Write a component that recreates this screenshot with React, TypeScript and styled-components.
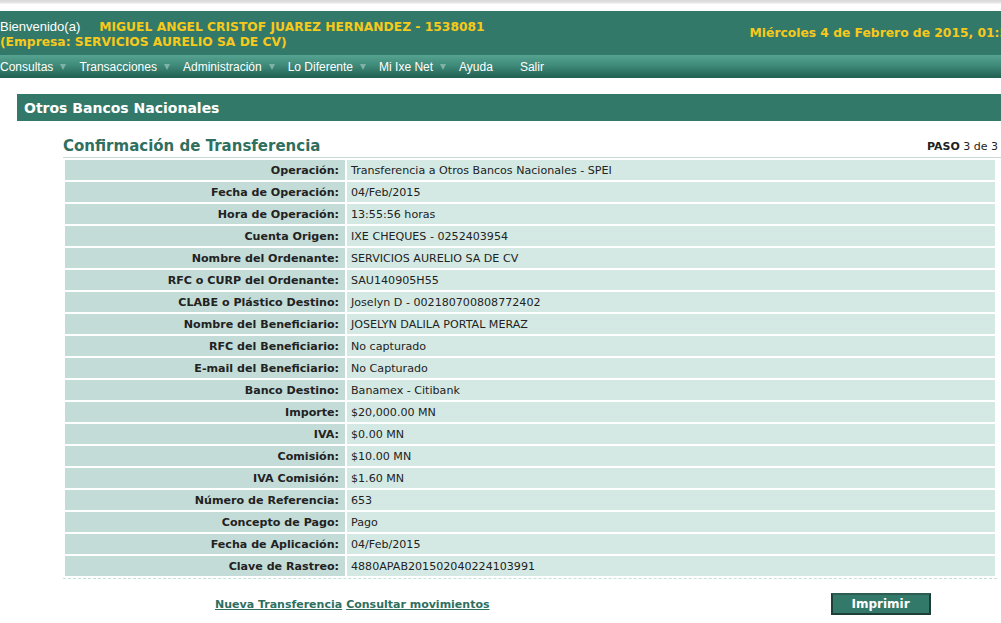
import styled, { createGlobalStyle } from "styled-components";

const GlobalStyle = createGlobalStyle`
  html, body {
    margin: 0;
    padding: 0;
    background: #ffffff;
  }
  body {
    font-family: "DejaVu Sans", Verdana, sans-serif;
    overflow: hidden;
  }
`;

const rows: [string, string][] = [
  ["Operación:", "Transferencia a Otros Bancos Nacionales - SPEI"],
  ["Fecha de Operación:", "04/Feb/2015"],
  ["Hora de Operación:", "13:55:56 horas"],
  ["Cuenta Origen:", "IXE CHEQUES - 0252403954"],
  ["Nombre del Ordenante:", "SERVICIOS AURELIO SA DE CV"],
  ["RFC o CURP del Ordenante:", "SAU140905H55"],
  ["CLABE o Plástico Destino:", "Joselyn D - 002180700808772402"],
  ["Nombre del Beneficiario:", "JOSELYN DALILA PORTAL MERAZ"],
  ["RFC del Beneficiario:", "No capturado"],
  ["E-mail del Beneficiario:", "No Capturado"],
  ["Banco Destino:", "Banamex - Citibank"],
  ["Importe:", "$20,000.00 MN"],
  ["IVA:", "$0.00 MN"],
  ["Comisión:", "$10.00 MN"],
  ["IVA Comisión:", "$1.60 MN"],
  ["Número de Referencia:", "653"],
  ["Concepto de Pago:", "Pago"],
  ["Fecha de Aplicación:", "04/Feb/2015"],
  ["Clave de Rastreo:", "4880APAB201502040224103991"],
];

const menu = [
  { label: "Consultas", arrow: true },
  { label: "Transacciones", arrow: true },
  { label: "Administración", arrow: true },
  { label: "Lo Diferente", arrow: true },
  { label: "Mi Ixe Net", arrow: true },
  { label: "Ayuda", arrow: false },
  { label: "Salir", arrow: false },
];

export default function App() {
  return (
    <>
      <GlobalStyle />
      <Page>
        <TopStrip />
        <Header>
          <Welcome>
            <WelcomeLine>
              <Hello>Bienvenido(a)</Hello>
              <UserName>MIGUEL ANGEL CRISTOF JUAREZ HERNANDEZ - 1538081</UserName>
            </WelcomeLine>
            <UserName>(Empresa: SERVICIOS AURELIO SA DE CV)</UserName>
          </Welcome>
          <DateText>Miércoles 4 de Febrero de 2015, 01:56 p.m.</DateText>
        </Header>
        <NavBar>
          {menu.map((m) => (
            <NavItem key={m.label} $gapAfter={m.label === "Ayuda"}>
              {m.label}
              {m.arrow && <Arrow />}
            </NavItem>
          ))}
        </NavBar>
        <SectionBar>Otros Bancos Nacionales</SectionBar>
        <Content>
          <TitleRow>
            <Title>Confirmación de Transferencia</Title>
            <Step>
              <b>PASO</b> 3 de 3
            </Step>
          </TitleRow>
          <DataTable>
            <tbody>
              {rows.map(([label, value]) => (
                <tr key={label}>
                  <LabelCell>{label}</LabelCell>
                  <ValueCell>{value}</ValueCell>
                </tr>
              ))}
            </tbody>
          </DataTable>
          <Footer>
            <Links>
              <Link href="#">Nueva Transferencia</Link>
              <Link href="#">Consultar movimientos</Link>
            </Links>
            <PrintButton type="button">Imprimir</PrintButton>
          </Footer>
        </Content>
      </Page>
    </>
  );
}

const Page = styled.div`
  width: 1001px;
  overflow: hidden;
`;

const TopStrip = styled.div`
  height: 11px;
  background: linear-gradient(#d8d8d8 0, #e6e6e6 3px, #ffffff 4px, #ffffff 100%);
`;

const Header = styled.div`
  height: 44px;
  background: #33796a;
  display: flex;
  align-items: center;
  white-space: nowrap;
  overflow: hidden;
`;

const Welcome = styled.div`
  display: flex;
  flex-direction: column;
  gap: 1px;
  padding-top: 1px;
`;

const WelcomeLine = styled.div`
  display: flex;
  align-items: baseline;
  gap: 19px;
`;

const Hello = styled.span`
  font-family: "Liberation Sans", Arial, sans-serif;
  font-size: 13px;
  color: #ffffff;
`;

const UserName = styled.span`
  font-family: "DejaVu Sans", Verdana, sans-serif;
  font-weight: bold;
  font-size: 12.3px;
  color: #f7c91a;
`;

const DateText = styled.span`
  font-family: "DejaVu Sans", Verdana, sans-serif;
  font-weight: bold;
  font-size: 12.3px;
  color: #f7c91a;
  margin-left: 265px;
  flex-shrink: 0;
`;

const NavBar = styled.div`
  height: 23px;
  background: linear-gradient(#56a392 0%, #3f8a79 45%, #215f51 100%);
  display: flex;
  align-items: center;
`;

const NavItem = styled.span<{ $gapAfter?: boolean }>`
  font-family: "Liberation Sans", Arial, sans-serif;
  font-size: 12px;
  color: #ffffff;
  display: flex;
  align-items: center;
  margin-right: ${(p) => (p.$gapAfter ? "27px" : "0")};
`;

const Arrow = styled.span`
  width: 0;
  height: 0;
  border-left: 3.5px solid transparent;
  border-right: 3.5px solid transparent;
  border-top: 6px solid #7fb3a6;
  margin: 1px 13px 0 7px;
`;

const SectionBar = styled.div`
  margin: 16px 0 0 17px;
  height: 27px;
  background: #33796a;
  color: #ffffff;
  font-family: "DejaVu Sans", Verdana, sans-serif;
  font-weight: bold;
  font-size: 14px;
  display: flex;
  align-items: center;
  padding-left: 7px;
`;

const Content = styled.div`
  margin: 16px 0 0 63px;
  width: 935px;
`;

const TitleRow = styled.div`
  display: flex;
  justify-content: space-between;
  align-items: flex-end;
  border-bottom: 1px solid #c9d9d5;
  padding-bottom: 2px;
  width: 938px;
`;

const Title = styled.h1`
  margin: 0;
  font-family: "DejaVu Sans", Verdana, sans-serif;
  font-weight: bold;
  font-size: 15px;
  color: #2f6f60;
`;

const Step = styled.span`
  font-family: "DejaVu Sans", Verdana, sans-serif;
  font-size: 11px;
  color: #222222;
  padding: 0 3px 2px 0;
  b {
    font-weight: bold;
  }
`;

const DataTable = styled.table`
  border-collapse: separate;
  border-spacing: 2px;
  width: 934px;
  font-family: "DejaVu Sans", Verdana, sans-serif;
  font-size: 11.1px;
  border-bottom: 1px dashed #c4e0da;
  td {
    height: 20px;
    padding: 0;
  }
`;

const LabelCell = styled.td`
  width: 274px;
  background: #c4dcd7;
  text-align: right;
  font-weight: bold;
  color: #222222;
  padding-right: 6px !important;
`;

const ValueCell = styled.td`
  background: #d4e9e4;
  color: #222222;
  padding-left: 4px !important;
`;

const Footer = styled.div`
  display: flex;
  align-items: center;
  margin-top: 14px;
`;

const Links = styled.div`
  display: flex;
  gap: 4px;
  margin-left: 152px;
  padding-top: 1px;
`;

const Link = styled.a`
  font-family: "DejaVu Sans", Verdana, sans-serif;
  font-weight: bold;
  font-size: 11px;
  color: #2f6f60;
  text-decoration: underline;
`;

const PrintButton = styled.button`
  margin-left: 341px;
  width: 100px;
  height: 22px;
  background: #33796a;
  border: 2px solid #1d3f37;
  border-top-color: #2c5c52;
  color: #ffffff;
  font-family: "DejaVu Sans", Verdana, sans-serif;
  font-weight: bold;
  font-size: 12px;
  padding: 0;
`;
